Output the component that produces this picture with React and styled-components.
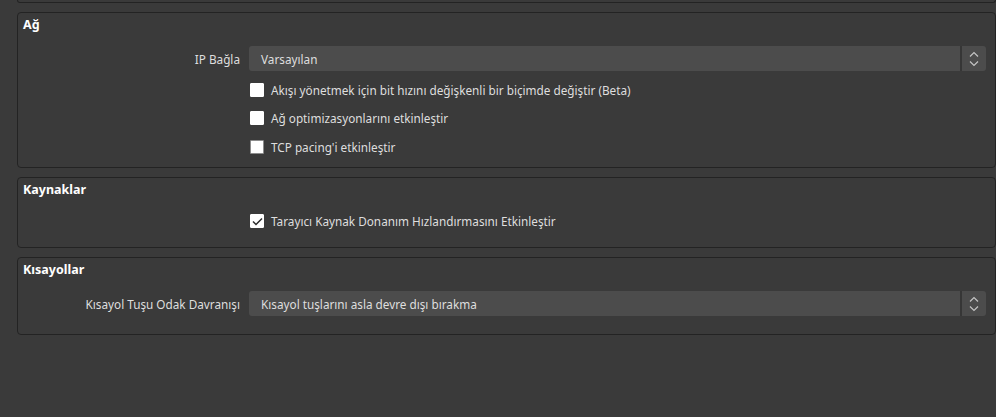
import React from 'react';
import styled, {createGlobalStyle} from 'styled-components';

const GlobalStyle = createGlobalStyle`
  html, body {
    margin: 0;
    padding: 0;
    background: #3a3a3a;
    width: 996px;
    height: 417px;
    overflow: hidden;
  }
  body {
    font-family: "Noto Sans", "Liberation Sans", sans-serif;
    font-size: 11.75px;
    color: #dedede;
  }
`;

const Page = styled.div`
  display: flex;
  flex-direction: column;
  gap: 9px;
  padding-left: 17px;
`;

const CutGroup = styled.div`
  height: 2px;
  border: 1px solid #232323;
  border-top: none;
  border-radius: 0 0 4px 4px;
`;

const Group = styled.section`
  border: 1px solid #232323;
  border-radius: 4px;
  padding: 4px 9px ${p => p.$pb}px 5px;
`;

const Title = styled.div`
  font-weight: 700;
  font-size: 12.5px;
  color: #ffffff;
  line-height: 15px;
`;

const Form = styled.div`
  margin-top: 14px;
  display: grid;
  grid-template-columns: 217px 1fr;
  column-gap: 9px;
  row-gap: 8.5px;
  align-items: center;
`;

const Label = styled.div`
  text-align: right;
  white-space: nowrap;
`;

const Combo = styled.div`
  grid-column: 2;
  display: flex;
  height: 25px;
  background: #4c4c4c;
  border-radius: 3px;
  overflow: hidden;
`;

const ComboText = styled.div`
  flex: 1;
  display: flex;
  align-items: center;
  padding-left: 12px;
  white-space: nowrap;
`;

const Spinner = styled.div`
  width: 24px;
  border-left: 2px solid #363636;
  display: flex;
  align-items: center;
  justify-content: center;
`;

const CheckRow = styled.label`
  grid-column: 2;
  display: flex;
  align-items: center;
  gap: 7px;
  height: 20px;
  white-space: nowrap;
`;

const Box = styled.span`
  width: 14px;
  height: 14px;
  box-sizing: border-box;
  margin-left: 1px;
  background: #ffffff;
  border-radius: 1px;
  border: 1px solid ${p => (p.$focus ? '#8c8c8c' : '#ffffff')};
  display: flex;
  align-items: center;
  justify-content: center;
`;

function Arrows() {
  return (
    <svg width="10" height="16" viewBox="0 0 10 16">
      <path d="M1 5.5 L5 1.5 L9 5.5" fill="none" stroke="#c4c4c4" strokeWidth="1.2" />
      <path d="M1 10.5 L5 14.5 L9 10.5" fill="none" stroke="#c4c4c4" strokeWidth="1.2" />
    </svg>
  );
}

function Select({value}) {
  return (
    <Combo>
      <ComboText>{value}</ComboText>
      <Spinner><Arrows /></Spinner>
    </Combo>
  );
}

function Check({checked, focus, children}) {
  return (
    <CheckRow>
      <Box $focus={focus}>
        {checked && (
          <svg width="11" height="9" viewBox="0 0 11 9">
            <path d="M1 4.5 L4 7.5 L10 1.5" fill="none" stroke="#2c2c2c" strokeWidth="1.5" />
          </svg>
        )}
      </Box>
      {children}
    </CheckRow>
  );
}

export default function App() {
  return (
    <>
      <GlobalStyle />
      <Page>
        <CutGroup />
        <Group $pb={10.5}>
          <Title>Ağ</Title>
          <Form>
            <Label>IP Bağla</Label>
            <Select value="Varsayılan" />
            <Check>Akışı yönetmek için bit hızını değişkenli bir biçimde değiştir (Beta)</Check>
            <Check>Ağ optimizasyonlarını etkinleştir</Check>
            <Check focus>TCP pacing'i etkinleştir</Check>
          </Form>
        </Group>
        <Group $pb={16}>
          <Title>Kaynaklar</Title>
          <Form>
            <Check checked>Tarayıcı Kaynak Donanım Hızlandırmasını Etkinleştir</Check>
          </Form>
        </Group>
        <Group $pb={18}>
          <Title>Kısayollar</Title>
          <Form>
            <Label>Kısayol Tuşu Odak Davranışı</Label>
            <Select value="Kısayol tuşlarını asla devre dışı bırakma" />
          </Form>
        </Group>
      </Page>
    </>
  );
}
